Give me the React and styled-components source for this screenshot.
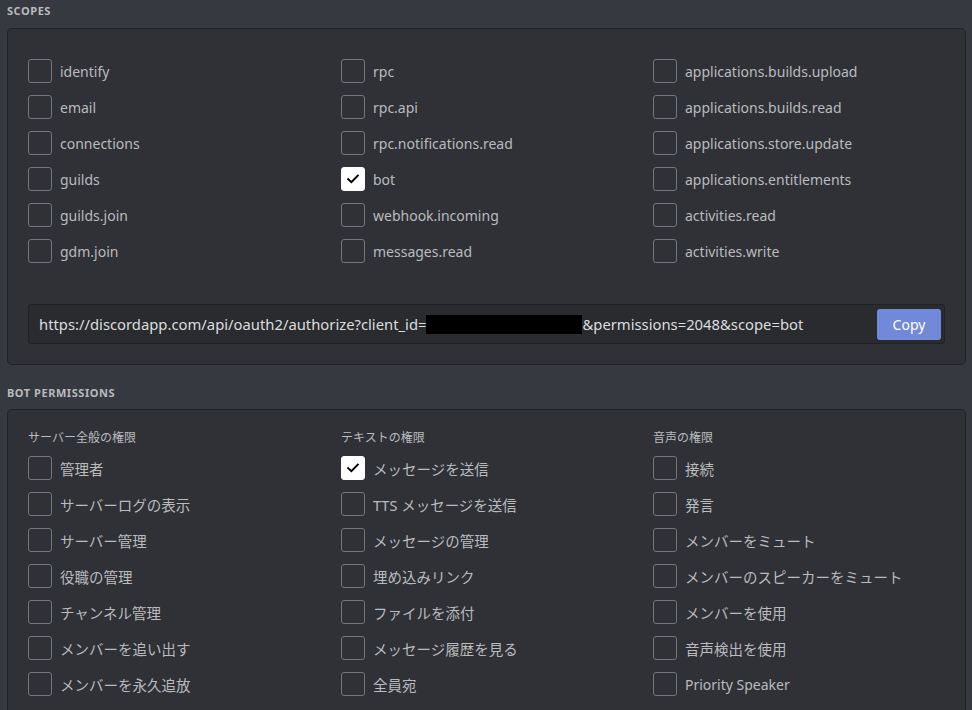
import React from 'react';
import styled, { createGlobalStyle } from 'styled-components';

const GlobalStyle = createGlobalStyle`
  body {
    margin: 0;
    background: #36393f;
    font-family: 'Noto Sans', 'Noto Sans CJK JP', sans-serif;
    overflow: hidden;
  }
`;

const Page = styled.div`
  width: 972px;
  height: 710px;
  box-sizing: border-box;
  padding: 0 5px 0 7px;
  border-left: 1px solid #9a9ca0;
  margin-left: -1px;
  overflow: hidden;
`;

const SectionTitle = styled.h2`
  margin: 0;
  padding: ${(p) => (p.first ? '3px 0 9px' : '20px 0 8px')};
  font-size: 11px;
  line-height: 16px;
  font-weight: 700;
  letter-spacing: 0.05em;
  text-transform: uppercase;
  color: #b9bbbe;
`;

const Panel = styled.div`
  background: #2f3136;
  border: 1px solid #202225;
  border-radius: 5px;
  padding: ${(p) => (p.compact ? '20px 20px 20px' : '24px 20px 20px')};
`;

const Grid = styled.div`
  display: grid;
  grid-template-columns: 313px 312px 1fr;
`;

const Column = styled.div`
  display: flex;
  flex-direction: column;
`;

const ColumnHeader = styled.div`
  font-size: 12px;
  line-height: 16px;
  height: 16px;
  margin-bottom: 4px;
  color: #b9bbbe;
`;

const Row = styled.label`
  display: flex;
  align-items: center;
  height: 36px;
  gap: 8px;
`;

const Box = styled.span`
  width: 24px;
  height: 24px;
  box-sizing: border-box;
  border-radius: 3px;
  border: 1px solid ${(p) => (p.checked ? '#ffffff' : '#72767d')};
  background: ${(p) => (p.checked ? '#ffffff' : 'transparent')};
  display: flex;
  align-items: center;
  justify-content: center;
  flex-shrink: 0;
`;

const Label = styled.span`
  font-size: ${(p) => (p.jp ? '14.5px' : '14px')};
  color: #b9bbbe;
  white-space: nowrap;
`;

const UrlBox = styled.div`
  margin-top: 35px;
  height: 40px;
  box-sizing: border-box;
  background: #292b2f;
  border: 1px solid #202225;
  border-radius: 3px;
  display: flex;
  align-items: center;
  padding: 0 4px 0 10px;
`;

const UrlText = styled.div`
  flex: 1;
  font-size: 14.8px;
  color: #dcddde;
  white-space: nowrap;
  display: flex;
  align-items: center;
`;

const Redacted = styled.span`
  display: inline-block;
  width: 156px;
  height: 19px;
  background: #000;
`;

const CopyButton = styled.button`
  width: 64px;
  height: 31px;
  margin-right: -1px;
  border: none;
  border-radius: 3px;
  background: #7289da;
  color: #ffffff;
  font-family: inherit;
  font-size: 14px;
  padding: 0;
`;

const Check = ({ checked }) => (
  <Box checked={checked}>
    {checked && (
      <svg width="16" height="16" viewBox="0 0 16 16">
        <path d="M3.2 8.2 L6.4 11.2 L12.8 4.6" fill="none" stroke="#000" strokeWidth="2" strokeLinecap="square" />
      </svg>
    )}
  </Box>
);

const scopes = [
  ['identify', 'email', 'connections', 'guilds', 'guilds.join', 'gdm.join'],
  ['rpc', 'rpc.api', 'rpc.notifications.read', 'bot', 'webhook.incoming', 'messages.read'],
  [
    'applications.builds.upload',
    'applications.builds.read',
    'applications.store.update',
    'applications.entitlements',
    'activities.read',
    'activities.write',
  ],
];

const permissions = [
  {
    title: 'サーバー全般の権限',
    items: ['管理者', 'サーバーログの表示', 'サーバー管理', '役職の管理', 'チャンネル管理', 'メンバーを追い出す', 'メンバーを永久追放'],
  },
  {
    title: 'テキストの権限',
    items: ['メッセージを送信', 'TTS メッセージを送信', 'メッセージの管理', '埋め込みリンク', 'ファイルを添付', 'メッセージ履歴を見る', '全員宛'],
  },
  {
    title: '音声の権限',
    items: ['接続', '発言', 'メンバーをミュート', 'メンバーのスピーカーをミュート', 'メンバーを使用', '音声検出を使用', 'Priority Speaker'],
  },
];

const checkedItems = ['bot', 'メッセージを送信'];

const App = () => {
  return (
    <Page>
      <GlobalStyle />
      <SectionTitle first>Scopes</SectionTitle>
      <Panel>
        <Grid>
          {scopes.map((col, i) => (
            <Column key={i}>
              {col.map((s) => (
                <Row key={s}>
                  <Check checked={checkedItems.includes(s)} />
                  <Label>{s}</Label>
                </Row>
              ))}
            </Column>
          ))}
        </Grid>
        <UrlBox>
          <UrlText>
            https://discordapp.com/api/oauth2/authorize?client_id=<Redacted />&amp;permissions=2048&amp;scope=bot
          </UrlText>
          <CopyButton>Copy</CopyButton>
        </UrlBox>
      </Panel>

      <SectionTitle>Bot Permissions</SectionTitle>
      <Panel compact>
        <Grid>
          {permissions.map((col) => (
            <Column key={col.title}>
              <ColumnHeader>{col.title}</ColumnHeader>
              {col.items.map((s) => (
                <Row key={s}>
                  <Check checked={checkedItems.includes(s)} />
                  <Label jp={!/^[A-Za-z ]+$/.test(s)}>{s}</Label>
                </Row>
              ))}
            </Column>
          ))}
        </Grid>
      </Panel>
    </Page>
  );
};

export default App;
